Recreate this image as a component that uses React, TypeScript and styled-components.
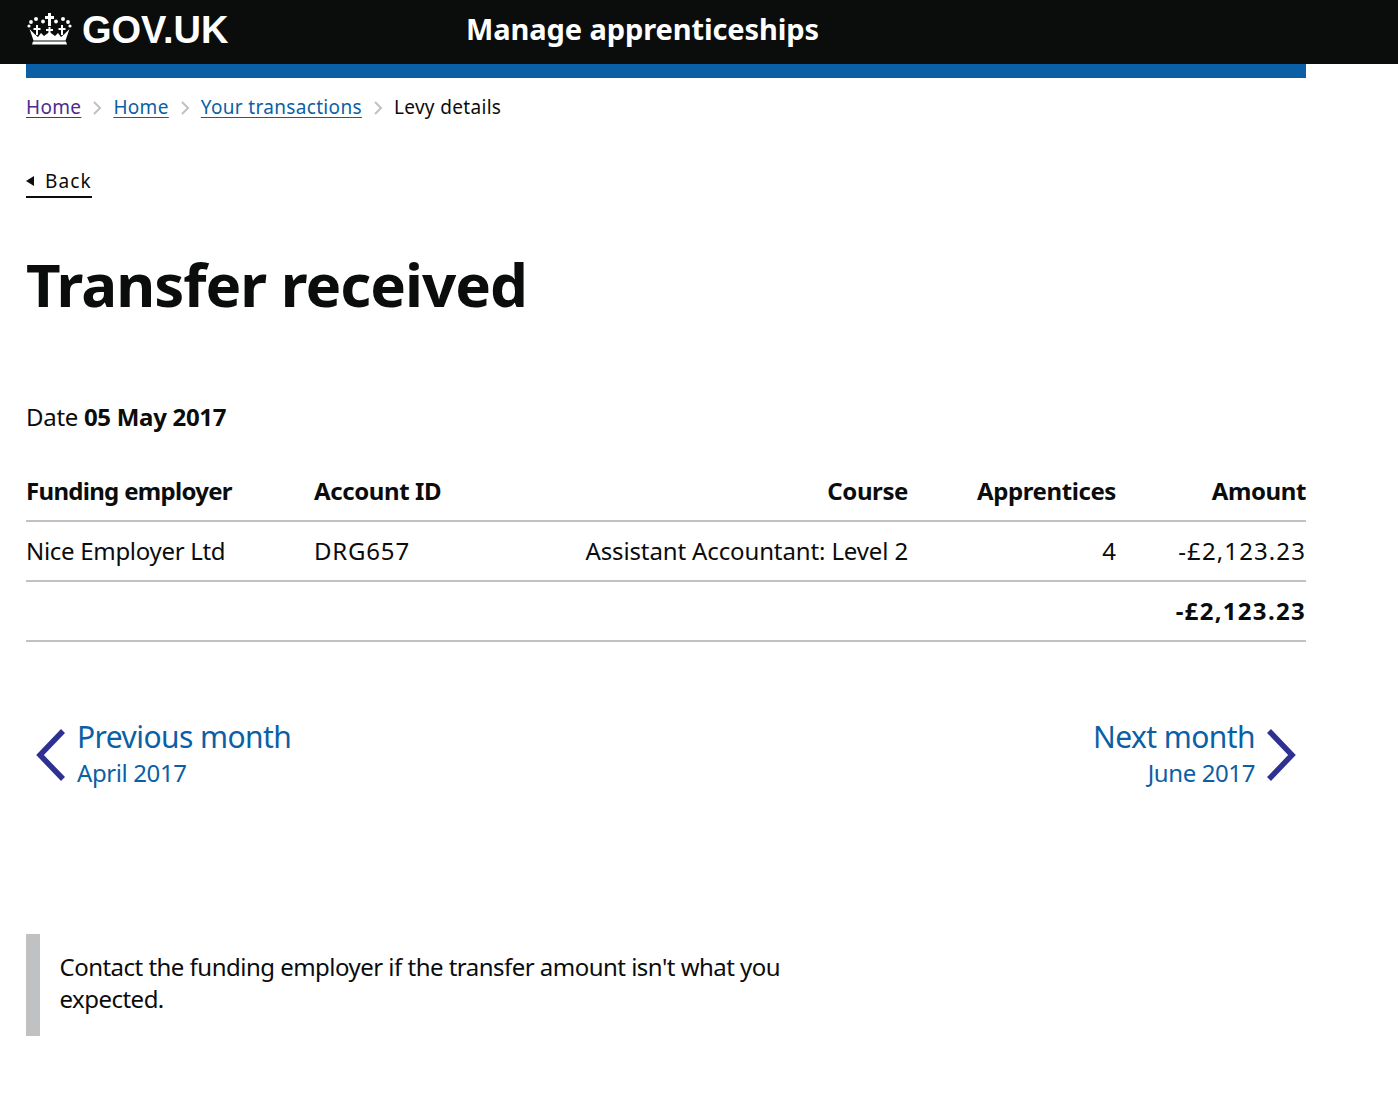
import React from "react";
import styled, { createGlobalStyle } from "styled-components";

const GlobalStyle = createGlobalStyle`
  html, body {
    margin: 0;
    padding: 0;
    background: #fff;
    color: #0b0c0c;
    font-family: "Noto Sans", "Open Sans", Arial, sans-serif;
  }
`;

const Header = styled.header`
  box-sizing: border-box;
  background: #0b0c0c;
  height: 64px;
  display: flex;
  align-items: center;
  padding: 0 0 7px 27px;
`;

const Logo = styled.div`
  width: 439px;
  display: flex;
  align-items: center;
  gap: 10px;
  color: #fff;
  font: 700 38px/1 "Liberation Sans", Arial, sans-serif;
`;

const LogoText = styled.span`
  padding-top: 2px;
`;

const ServiceName = styled.div`
  color: #fff;
  font-size: 29px;
  font-weight: 700;
  letter-spacing: -0.1px;
`;

const Page = styled.main`
  width: 1280px;
  margin-left: 26px;
`;

const BlueBar = styled.div`
  height: 14px;
  background: #0b5fa5;
`;

const Breadcrumbs = styled.nav`
  display: flex;
  align-items: center;
  height: 22px;
  margin-top: 18px;
  font-size: 19px;
  letter-spacing: 0.33px;
`;

const Crumb = styled.a<{ $visited?: boolean }>`
  color: ${(p) => (p.$visited ? "#4c2c92" : "#0b5fa5")};
  text-decoration: underline;
  text-underline-offset: 3px;
`;

const Current = styled.span`
  color: #0b0c0c;
`;

const Chevron = styled.svg`
  width: 11px;
  height: 16px;
  margin: 2px 10px 0 11px;
`;

const BackLink = styled.a`
  display: inline-flex;
  align-items: center;
  gap: 11px;
  height: 30px;
  margin-top: 48px;
  border-bottom: 2px solid #0b0c0c;
  font-size: 19px;
  letter-spacing: 1.1px;
  color: #0b0c0c;
  &::before {
    content: "";
    border-style: solid;
    border-width: 5.5px 8px 5.5px 0;
    border-color: transparent #0b0c0c transparent transparent;
  }
`;

const Title = styled.h1`
  margin: 46px 0 0;
  font-size: 60px;
  line-height: 80px;
  font-weight: 700;
  letter-spacing: -1px;
`;

const DateLine = styled.p`
  margin: 77px 0 0;
  font-size: 24px;
  line-height: 32px;
  letter-spacing: -0.3px;
  strong {
    font-weight: 700;
  }
`;

const Table = styled.table`
  width: 100%;
  margin-top: 28px;
  border-collapse: collapse;
  font-size: 24px;
`;

const HeadCell = styled.th<{ $right?: boolean; $width: number; $spacing: number }>`
  width: ${(p) => p.$width}px;
  height: 58px;
  padding: 0 0 1px;
  border-bottom: 2px solid #bfc1c3;
  text-align: ${(p) => (p.$right ? "right" : "left")};
  font-weight: 700;
  letter-spacing: ${(p) => p.$spacing}px;
`;

const Cell = styled.td<{ $right?: boolean; $bold?: boolean; $spacing?: number }>`
  height: 56px;
  padding: 0 0 2px;
  border-bottom: 2px solid #bfc1c3;
  text-align: ${(p) => (p.$right ? "right" : "left")};
  font-weight: ${(p) => (p.$bold ? 700 : 400)};
  letter-spacing: ${(p) => p.$spacing ?? 0}px;
`;

const Pager = styled.div`
  display: flex;
  justify-content: space-between;
  margin-top: 75px;
`;

const PagerLink = styled.a<{ $next?: boolean }>`
  display: flex;
  align-items: center;
  gap: 11px;
  color: #0b5fa5;
  text-decoration: none;
  text-align: ${(p) => (p.$next ? "right" : "left")};
  padding: 0 ${(p) => (p.$next ? "9px" : "0")} 0 ${(p) => (p.$next ? "0" : "9px")};
`;

const PagerText = styled.div`
  display: flex;
  flex-direction: column;
`;

const PagerTitle = styled.span`
  font-size: 30px;
  line-height: 40px;
  letter-spacing: -0.57px;
`;

const PagerSub = styled.span`
  font-size: 24px;
  line-height: 32px;
  letter-spacing: -0.4px;
`;

const Arrow = styled.svg`
  width: 31px;
  height: 54px;
  flex: none;
  margin-top: 4px;
`;

const Inset = styled.div`
  width: 760px;
  margin-top: 145px;
  padding: 17px 0 21px 19.5px;
  border-left: 14px solid #bfc1c3;
  font-size: 24px;
  line-height: 32px;
  letter-spacing: -0.52px;
`;

const dots = [
  [2, 13, 1.6],
  [4, 9, 1.9],
  [9, 6, 2],
  [16, 8.5, 1.9],
  [29, 8.5, 1.9],
  [36, 6, 2],
  [41, 9, 1.9],
  [43, 13, 1.6],
];

const Crown = () => (
  <svg width="45" height="32" viewBox="0 0 45 32" fill="#fff">
    <path d="M21 0h3v3h3v3h-3v7h-3V6h-3V3h3z" />
    <path d="M9 12h2v3h2.500v2H11v5H9v-5H6.500v-2H9zM34 12h2v3h2.500v2H36v5h-2v-5h-2.500v-2H34zM21.500 14h2v2h2.500v2h-2.500v3h-2v-3H19v-2h2.500z" />
    <path d="M6.500 27.500 2.500 16 8 21.500 11 24l3-4 3 3 5.500-4 5.500 4 3-3 3 4 3-2.500 5.500-5.500-4 11.500z" />
    <path d="M6 28.500h33l1 3H5z" />
    {dots.map(([cx, cy, r]) => (
      <circle key={`${cx}-${cy}`} cx={cx} cy={cy} r={r} />
    ))}
  </svg>
);

const Separator = () => (
  <Chevron viewBox="0 0 11 16" fill="none">
    <path d="M2 2l6 6-6 6" stroke="#bfc1c3" strokeWidth="2" />
  </Chevron>
);

const columns = [
  { head: "Funding employer", width: 288, headSpacing: -0.7, cell: "Nice Employer Ltd", spacing: -0.3 },
  { head: "Account ID", width: 200, headSpacing: -0.4, cell: "DRG657", spacing: 0.8 },
  { head: "Course", width: 394, headSpacing: -0.4, cell: "Assistant Accountant: Level 2", spacing: -0.13 },
  { head: "Apprentices", width: 208, headSpacing: -0.4, cell: "4", spacing: 0 },
  { head: "Amount", width: 190, headSpacing: -0.4, cell: "-£2,123.23", spacing: 1.1 },
];

export default function App() {
  return (
    <>
      <GlobalStyle />
      <Header>
        <Logo>
          <Crown />
          <LogoText>GOV.UK</LogoText>
        </Logo>
        <ServiceName>Manage apprenticeships</ServiceName>
      </Header>
      <Page>
        <BlueBar />
        <Breadcrumbs>
          <Crumb href="#" $visited>Home</Crumb>
          <Separator />
          <Crumb href="#">Home</Crumb>
          <Separator />
          <Crumb href="#">Your transactions</Crumb>
          <Separator />
          <Current>Levy details</Current>
        </Breadcrumbs>
        <BackLink>Back</BackLink>
        <Title>Transfer received</Title>
        <DateLine>
          Date <strong>05 May 2017</strong>
        </DateLine>
        <Table>
          <tbody>
            <tr>
              {columns.map((c, i) => (
                <HeadCell key={c.head} $width={c.width} $right={i > 1} $spacing={c.headSpacing}>
                  {c.head}
                </HeadCell>
              ))}
            </tr>
            <tr>
              {columns.map((c, i) => (
                <Cell key={c.head} $right={i > 1} $spacing={c.spacing}>{c.cell}</Cell>
              ))}
            </tr>
            <tr>
              <Cell colSpan={4} />
              <Cell $right $bold $spacing={1.3}>-£2,123.23</Cell>
            </tr>
          </tbody>
        </Table>
        <Pager>
          <PagerLink href="#">
            <Arrow viewBox="0 0 31 54" fill="none">
              <path d="M28 3 5 27l23 24" stroke="#2e3191" strokeWidth="5.500" />
            </Arrow>
            <PagerText>
              <PagerTitle>Previous month</PagerTitle>
              <PagerSub>April 2017</PagerSub>
            </PagerText>
          </PagerLink>
          <PagerLink href="#" $next>
            <PagerText>
              <PagerTitle>Next month</PagerTitle>
              <PagerSub>June 2017</PagerSub>
            </PagerText>
            <Arrow viewBox="0 0 31 54" fill="none">
              <path d="M3 3l23 24L3 51" stroke="#2e3191" strokeWidth="5.500" />
            </Arrow>
          </PagerLink>
        </Pager>
        <Inset>Contact the funding employer if the transfer amount isn't what you expected.</Inset>
      </Page>
    </>
  );
}
